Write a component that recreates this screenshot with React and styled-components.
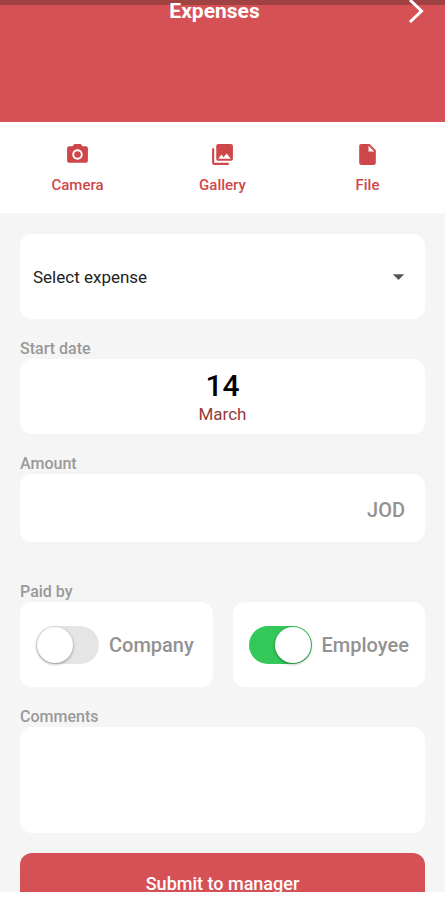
import React, { useState } from 'react';
import styled, { createGlobalStyle } from 'styled-components';
import {
  MdArrowDropDown,
  MdInsertDriveFile,
  MdPhotoCamera,
  MdPhotoLibrary,
} from 'react-icons/md';

const GlobalStyle = createGlobalStyle`
  *,
  *::before,
  *::after {
    box-sizing: border-box;
  }

  body {
    background: #fff;
    font-family: Roboto, 'Liberation Sans', sans-serif;
    margin: 0;
  }

  button,
  input,
  select,
  textarea {
    border: 0;
    font: inherit;
  }
`;

const Screen = styled.div`
  background: #f5f5f5;
  height: calc(100vh - 8px);
  overflow: hidden;
`;

const Header = styled.header`
  align-items: flex-start;
  background: #d65155;
  box-shadow: inset 0 5px 0 #a04142;
  display: flex;
  height: 122px;
  padding: 0 16px 0 24px;
`;

const Title = styled.h1`
  color: #fff;
  flex: 1;
  font-size: 21px;
  font-weight: 700;
  line-height: 22px;
  margin: 0;
  text-align: center;
`;

const NextButton = styled.button`
  background: none;
  color: #fff;
  display: flex;
  padding: 0;
`;

const Sources = styled.nav`
  background: #fff;
  display: grid;
  grid-template-columns: repeat(3, 1fr);
  padding: 0 5px;
`;

const SourceButton = styled.button`
  align-items: center;
  background: none;
  color: #cf474b;
  display: flex;
  flex-direction: column;
  font-size: 15px;
  font-weight: 500;
  gap: 9px;
  line-height: 18px;
  padding: 20px 0 19px;
`;

const Form = styled.form`
  display: flex;
  flex-direction: column;
  gap: 20px;
  padding: 21px 20px 20px;
`;

const Field = styled.div`
  margin-bottom: ${({ $spaced }) => ($spaced ? '20px' : '0')};
`;

const Label = styled.label`
  color: #999;
  display: block;
  font-size: 16px;
  font-weight: 500;
  line-height: 20px;
`;

const Card = styled.div`
  align-items: center;
  background: #fff;
  border-radius: 12px;
  display: flex;
`;

const SelectCard = styled(Card)`
  display: grid;
  color: #555;

  > * {
    grid-area: 1 / 1;
  }

  svg {
    justify-self: end;
    margin-right: 13px;
    pointer-events: none;
  }
`;

const Select = styled.select`
  appearance: none;
  background: none;
  color: #222;
  font-size: 17px;
  height: 85px;
  padding: 0 48px 0 13px;
  width: 100%;
`;

const DateButton = styled(Card).attrs({ as: 'button', type: 'button' })`
  flex-direction: column;
  justify-content: center;
  height: 75px;
  padding: 2px 0 0;
  width: 100%;
`;

const Day = styled.span`
  color: #000;
  font-size: 30px;
  font-weight: 500;
  line-height: 32px;
`;

const Month = styled.span`
  color: #97393b;
  font-size: 17px;
  line-height: 24px;
`;

const AmountCard = styled(Card)`
  height: 68px;
  padding: 4px 20px 0;
`;

const AmountInput = styled.input`
  background: none;
  flex: 1;
  font-size: 20px;
  min-width: 0;
  outline: 0;
  padding: 0;
`;

const Currency = styled.span`
  color: #929292;
  font-size: 20px;
  font-weight: 500;
`;

const PaidBy = styled.div`
  display: grid;
  gap: 20px;
  grid-template-columns: 1fr 1fr;
`;

const Toggle = styled(Card).attrs({ as: 'label' })`
  color: #929292;
  font-size: 20px;
  font-weight: 500;
  gap: 10px;
  height: 85px;
  padding: 0 0 0 16px;
`;

const Switch = styled.input`
  appearance: none;
  background: #e5e5e5;
  border-radius: 19px;
  display: flex;
  flex: none;
  height: 38px;
  margin: 0;
  padding: 1px;
  width: 63px;

  &::before {
    background: #fff;
    border-radius: 50%;
    box-shadow: 0 1px 3px rgba(0, 0, 0, 0.4);
    content: '';
    height: 36px;
    width: 36px;
  }

  &:checked {
    background: #34c759;
    justify-content: flex-end;
  }
`;

const Comments = styled.textarea`
  background: #fff;
  border-radius: 12px;
  display: block;
  font-size: 17px;
  height: 106px;
  outline: 0;
  padding: 12px;
  resize: none;
  width: 100%;
`;

const SubmitButton = styled.button`
  background: #d65155;
  border-radius: 12px;
  color: #fff;
  font-size: 18px;
  font-weight: 500;
  height: 60px;
  padding: 0;
`;

const sources = [
  { name: 'Camera', Icon: MdPhotoCamera },
  { name: 'Gallery', Icon: MdPhotoLibrary },
  { name: 'File', Icon: MdInsertDriveFile },
];

const App = () => {
  const [payer, setPayer] = useState('Employee');

  return (
    <Screen>
      <GlobalStyle />
      <Header>
        <Title>Expenses</Title>
        <NextButton type="button" aria-label="Next">
          <svg width="24" height="24" fill="none" stroke="currentColor">
            <path d="M5 0L16.500 11L5 22" strokeWidth="3" />
          </svg>
        </NextButton>
      </Header>
      <Sources>
        {sources.map(({ name, Icon }) => (
          <SourceButton key={name} type="button">
            <Icon size={25} />
            {name}
          </SourceButton>
        ))}
      </Sources>
      <Form onSubmit={(e) => e.preventDefault()}>
        <SelectCard>
          <Select aria-label="Expense">
            <option>Select expense</option>
          </Select>
          <MdArrowDropDown size={27} />
        </SelectCard>
        <Field>
          <Label htmlFor="date">Start date</Label>
          <DateButton id="date">
            <Day>14</Day>
            <Month>March</Month>
          </DateButton>
        </Field>
        <Field $spaced>
          <Label htmlFor="amount">Amount</Label>
          <AmountCard>
            <AmountInput id="amount" inputMode="decimal" />
            <Currency>JOD</Currency>
          </AmountCard>
        </Field>
        <Field role="group" aria-labelledby="paid-by">
          <Label as="span" id="paid-by">
            Paid by
          </Label>
          <PaidBy>
            {['Company', 'Employee'].map((name) => (
              <Toggle key={name}>
                <Switch
                  type="checkbox"
                  role="switch"
                  checked={payer === name}
                  onChange={() => setPayer(name)}
                />
                {name}
              </Toggle>
            ))}
          </PaidBy>
        </Field>
        <Field>
          <Label htmlFor="comments">Comments</Label>
          <Comments id="comments" />
        </Field>
        <SubmitButton type="submit">Submit to manager</SubmitButton>
      </Form>
    </Screen>
  );
};

export default App;
